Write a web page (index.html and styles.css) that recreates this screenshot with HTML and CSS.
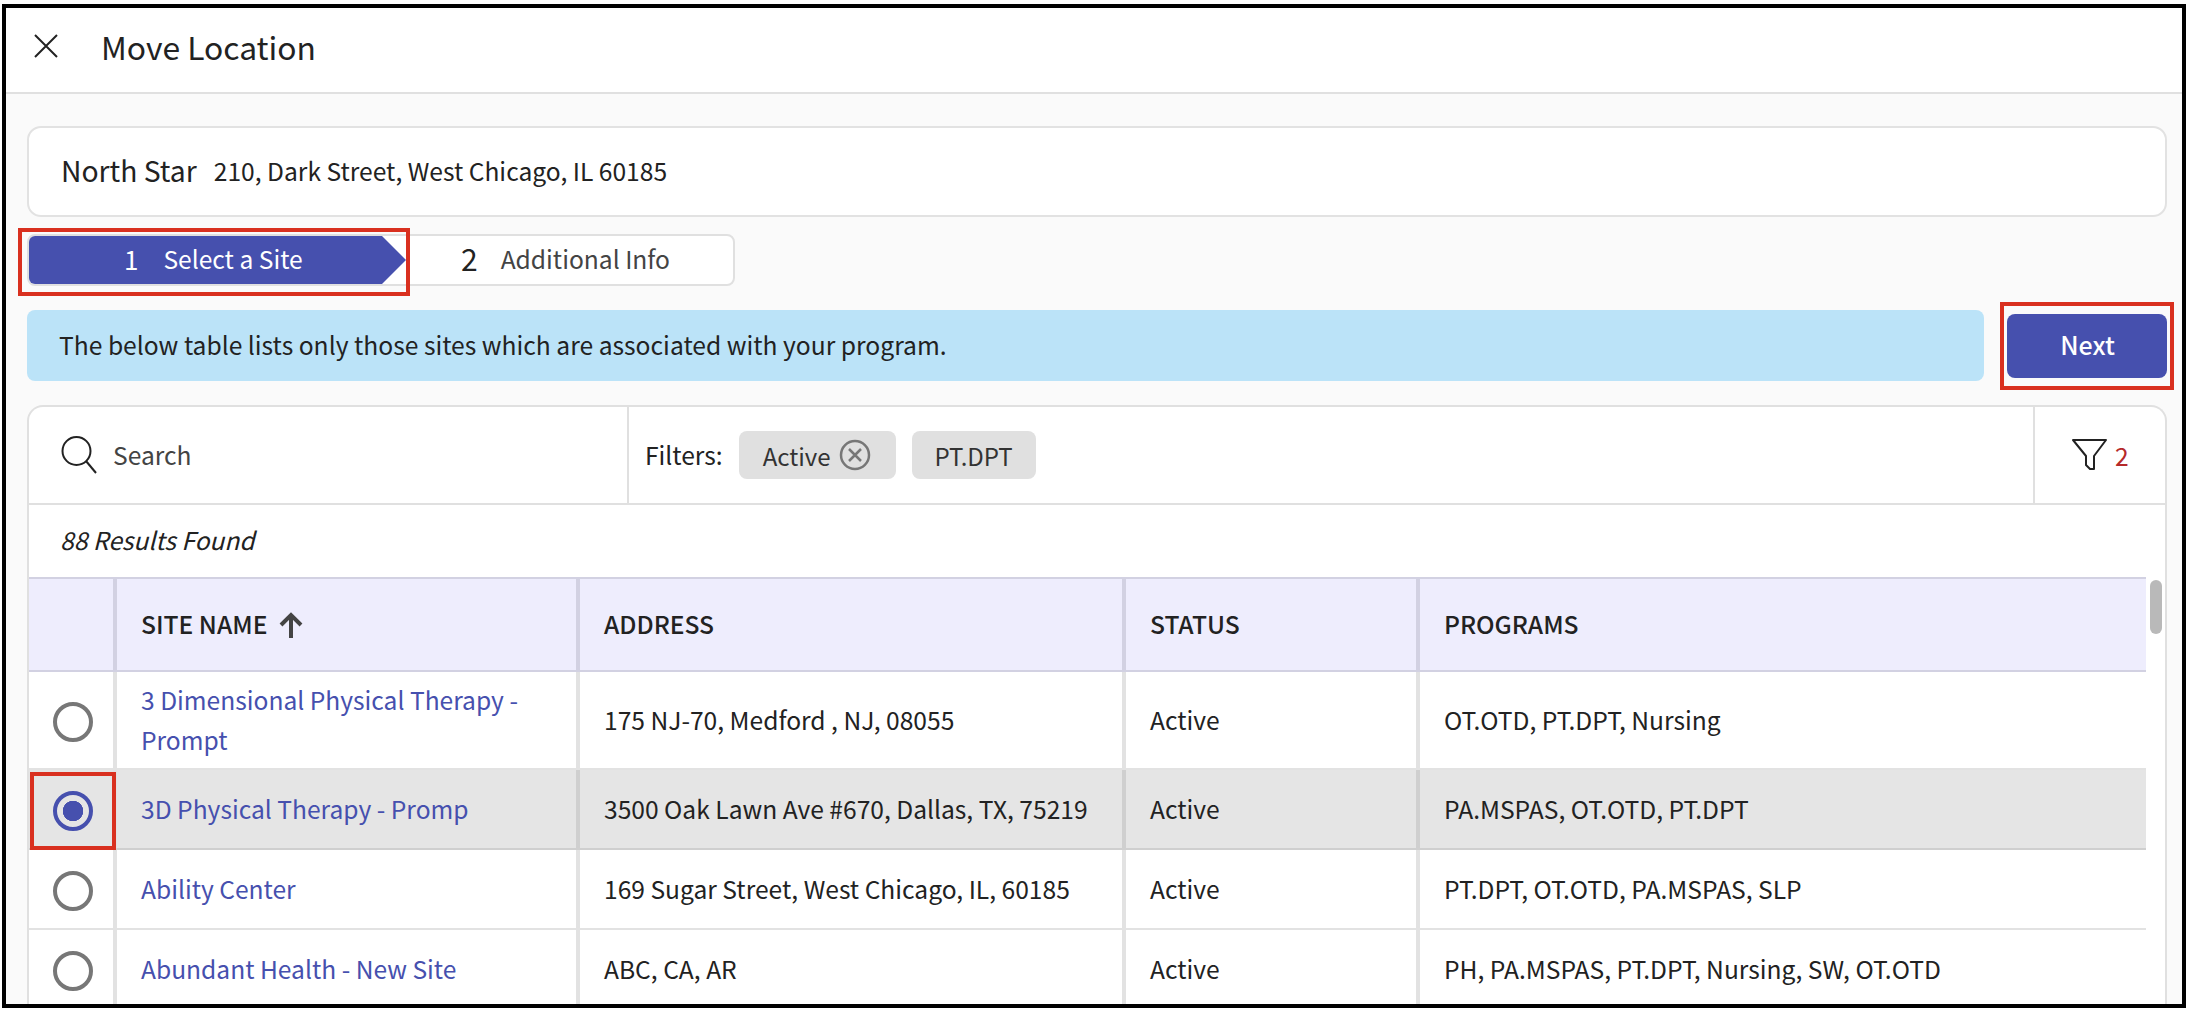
FILE: index.html
```html
<!DOCTYPE html>
<html lang="en">
<head>
    <meta charset="UTF-8">
    <meta name="viewport" content="width=device-width, initial-scale=1.0">
    <title>Move Location</title>
    <link rel="stylesheet" href="styles.css">
</head>
<body>
    <div class="frame">
        <div class="top-bar">
            <svg class="close-icon" width="24" height="24" viewBox="0 0 24 24"><path d="M1 1L23 23M23 1L1 23" fill="none" stroke="#222" stroke-width="2"/></svg>
            <h1>Move Location</h1>
        </div>
        <div class="content">
            <div class="site-card">
                <span class="site-title">North Star</span>
                <span class="site-address">210, Dark Street, West Chicago, IL 60185</span>
            </div>
            <div class="stepper">
                <div class="step step-active"><span class="step-num">1</span>Select a Site</div>
                <div class="step step-next"><span class="step-num">2</span>Additional Info</div>
                <div class="mark mark-step"></div>
            </div>
            <div class="notice-row">
                <div class="notice">The below table lists only those sites which are associated with your program.</div>
                <button class="next-btn">Next</button>
                <div class="mark mark-next"></div>
            </div>
            <div class="table-card">
                <div class="toolbar">
                    <div class="search">
                        <svg width="36" height="38" viewBox="0 0 36 38"><circle cx="15.500" cy="15" r="14" fill="none" stroke="#222" stroke-width="2"/><path d="M25 25L35 37" fill="none" stroke="#222" stroke-width="2"/></svg>
                        <span>Search</span>
                    </div>
                    <div class="filters">
                        <span class="filters-label">Filters:</span>
                        <span class="chip chip-active">Active
                            <svg width="32" height="32" viewBox="0 0 32 32"><circle cx="16" cy="16" r="14" fill="none" stroke="#777" stroke-width="2.500"/><path d="M10 10L22 22M22 10L10 22" fill="none" stroke="#777" stroke-width="2.500"/></svg>
                        </span>
                        <span class="chip chip-dpt">PT.DPT</span>
                    </div>
                    <div class="filter-count">
                        <svg width="37" height="34" viewBox="0 0 37 34"><path d="M2 2H35L23 18V31L19 31L15 27V18Z" fill="none" stroke="#222" stroke-width="2" stroke-linejoin="round"/></svg>
                        <span>2</span>
                    </div>
                </div>
                <div class="results">88 Results Found</div>
                <div class="table-wrap">
                    <table>
                        <thead>
                            <tr>
                                <th class="col-radio"></th>
                                <th class="col-name">SITE NAME<svg class="sort-icon" width="24" height="26" viewBox="0 0 24 26"><path d="M12 26V3M2 13L12 3L22 13" fill="none" stroke="#444" stroke-width="4"/></svg></th>
                                <th class="col-address">ADDRESS</th>
                                <th class="col-status">STATUS</th>
                                <th>PROGRAMS</th>
                            </tr>
                        </thead>
                        <tbody>
                            <tr class="row-tall">
                                <td class="cell-radio"><span class="radio"></span></td>
                                <td><a href="#">3 Dimensional Physical Therapy - Prompt</a></td>
                                <td>175 NJ-70, Medford , NJ, 08055</td>
                                <td>Active</td>
                                <td>OT.OTD, PT.DPT, Nursing</td>
                            </tr>
                            <tr class="row-selected">
                                <td class="cell-radio"><span class="radio radio-on"></span><div class="mark mark-radio"></div></td>
                                <td><a href="#">3D Physical Therapy - Promp</a></td>
                                <td>3500 Oak Lawn Ave #670, Dallas, TX, 75219</td>
                                <td>Active</td>
                                <td>PA.MSPAS, OT.OTD, PT.DPT</td>
                            </tr>
                            <tr>
                                <td class="cell-radio"><span class="radio"></span></td>
                                <td><a href="#">Ability Center</a></td>
                                <td>169 Sugar Street, West Chicago, IL, 60185</td>
                                <td>Active</td>
                                <td>PT.DPT, OT.OTD, PA.MSPAS, SLP</td>
                            </tr>
                            <tr>
                                <td class="cell-radio"><span class="radio"></span></td>
                                <td><a href="#">Abundant Health - New Site</a></td>
                                <td>ABC, CA, AR</td>
                                <td>Active</td>
                                <td>PH, PA.MSPAS, PT.DPT, Nursing, SW, OT.OTD</td>
                            </tr>
                        </tbody>
                    </table>
                    <div class="scrollbar"></div>
                </div>
            </div>
        </div>
    </div>
</body>
</html>
```

FILE: styles.css
```css
html, body {
    margin: 0;
    padding: 0;
    background: #fff;
}
body {
    font-family: "Noto Sans CJK SC", "Noto Sans", sans-serif;
    font-size: 24.6px;
    color: #222;
    padding: 4px 0 2px 2px;
    height: 1010px;
    box-sizing: border-box;
    overflow: hidden;
}
.frame {
    height: 1004px;
    box-sizing: border-box;
    border: 4px solid #000;
    background: #fafafa;
    overflow: hidden;
}
.top-bar {
    height: 86px;
    background: #fff;
    border-bottom: 2px solid #e0e0e0;
    box-sizing: border-box;
    display: flex;
    align-items: center;
    padding: 0 0 8px 28px;
}
.top-bar h1 {
    margin: 0 0 0 43px;
    font-size: 31.800px;
    font-weight: 400;
}
.content {
    padding: 32px 15px 0 21px;
}
.site-card {
    height: 91px;
    box-sizing: border-box;
    background: #fff;
    border: 2px solid #e2e2e2;
    border-radius: 14px;
    display: flex;
    align-items: center;
    padding: 0 0 4px 32px;
}
.site-title {
    font-size: 28.300px;
    margin-right: 17px;
}
.stepper {
    position: relative;
    margin-top: 17px;
    width: 708px;
    height: 52px;
    box-sizing: border-box;
    background: #fff;
    border: 2px solid #e0e0e0;
    border-radius: 8px;
    display: flex;
    align-items: center;
}
.step {
    display: flex;
    align-items: center;
    height: 100%;
    padding-bottom: 4px;
    box-sizing: border-box;
}
.step-active {
    width: 377px;
    background: #4650ae;
    color: #fff;
    padding-left: 95px;
    clip-path: polygon(0 0, 353px 0, 377px 50%, 353px 100%, 0 100%);
    border-radius: 6px 0 0 6px;
}
.step-active .step-num {
    font-size: 26px;
    margin-right: 25px;
}
.step-next {
    margin-left: 55px;
    color: #444;
}
.step-next .step-num {
    color: #222;
    font-size: 30px;
    margin-right: 23px;
}
.mark {
    position: absolute;
    border: 4px solid #d9301f;
    box-sizing: border-box;
    pointer-events: none;
}
.mark-step {
    left: -11px;
    top: -8px;
    width: 392px;
    height: 68px;
}
.notice-row {
    position: relative;
    margin-top: 24px;
    display: flex;
    align-items: flex-start;
    height: 72px;
}
.notice {
    width: 1958px;
    height: 71px;
    box-sizing: border-box;
    background: #bbe3f8;
    border-radius: 8px;
    display: flex;
    align-items: center;
    padding: 0 0 3px 32px;
    font-size: 24.650px;
}
.next-btn {
    margin: 4px 0 0 23px;
    width: 160px;
    height: 64px;
    padding: 0 0 4px 1px;
    border: none;
    border-radius: 8px;
    background: #4650ae;
    color: #fff;
    font-family: inherit;
    font-size: 25px;
    font-weight: 500;
}
.mark-next {
    right: -7px;
    top: -8px;
    width: 174px;
    height: 88px;
}
.table-card {
    margin-top: 23px;
    background: #fff;
    border: solid #e0e0e0;
    border-width: 2px 2px 0 2px;
    border-radius: 16px 16px 0 0;
}
.toolbar {
    display: flex;
    height: 98px;
    box-sizing: border-box;
    border-bottom: 2px solid #e0e0e0;
}
.search {
    width: 598px;
    display: flex;
    align-items: center;
    padding-left: 32px;
    box-sizing: border-box;
    color: #444;
}
.search span {
    margin: 0 0 3px 16px;
}
.filters {
    flex: 1;
    display: flex;
    align-items: center;
    border-left: 2px solid #e0e0e0;
    padding-left: 16px;
}
.filters-label {
    margin: 0 16px 2px 0;
}
.chip {
    height: 48px;
    background: #e0e0e0;
    border-radius: 8px;
    display: flex;
    align-items: center;
    box-sizing: border-box;
    font-size: 24px;
    color: #333;
}
.chip svg {
    margin-left: 8px;
}
.chip-active {
    width: 157px;
    padding-left: 24px;
}
.chip-dpt {
    width: 124px;
    margin-left: 16px;
    justify-content: center;
}
.filter-count {
    width: 132px;
    border-left: 2px solid #e0e0e0;
    box-sizing: border-box;
    display: flex;
    align-items: center;
    padding-left: 36px;
    color: #b52a2a;
}
.filter-count span {
    margin-left: 7px;
}
.results {
    height: 72px;
    display: flex;
    align-items: center;
    padding: 0 0 5px 31px;
    box-sizing: border-box;
    font-style: italic;
}
.table-wrap {
    position: relative;
    padding-right: 19px;
}
table {
    width: 100%;
    border-collapse: separate;
    border-spacing: 0;
    table-layout: fixed;
}
th {
    height: 95px;
    background: #eeedfd;
    border-top: 2px solid #d2d1e2;
    border-bottom: 2px solid #d2d1e2;
    border-left: 4px solid #d2d1e2;
    padding: 0 0 3px 24px;
    text-align: left;
    font-weight: 500;
    box-sizing: border-box;
}
th:first-child, td:first-child {
    border-left: none;
}
td {
    height: 80px;
    box-sizing: border-box;
    border-bottom: 2px solid #e2e2e2;
    border-left: 4px solid #e2e2e2;
    padding: 0 10px 2px 24px;
    line-height: 40px;
}
.col-radio {
    width: 84px;
}
.col-name {
    width: 463px;
}
.col-address {
    width: 546px;
}
.col-status {
    width: 294px;
}
.sort-icon {
    vertical-align: -4px;
    margin-left: 12px;
}
.row-tall td {
    height: 98px;
}
.row-selected td {
    background: #e5e5e5;
    border-bottom-color: #cfcfcf;
    border-left-color: #cfcfcf;
}
.row-selected td:nth-child(2) {
    border-left-color: #e2e2e2;
}
td a {
    color: #4650ae;
    text-decoration: none;
}
.cell-radio {
    position: relative;
    padding: 0 0 0 4px;
    text-align: center;
}
.radio {
    display: inline-block;
    vertical-align: middle;
    width: 40px;
    height: 40px;
    box-sizing: border-box;
    border: 4px solid #777;
    border-radius: 50%;
    background: #fff;
}
.radio-on {
    border-color: #4650ae;
    background: radial-gradient(circle, #4650ae 0 10px, transparent 10.500px);
}
.mark-radio {
    left: 1px;
    top: 2px;
    width: 86px;
    height: 78px;
}
.scrollbar {
    position: absolute;
    right: 3px;
    top: 3px;
    width: 12px;
    height: 54px;
    border-radius: 6px;
    background: #b9b9b9;
}
```
